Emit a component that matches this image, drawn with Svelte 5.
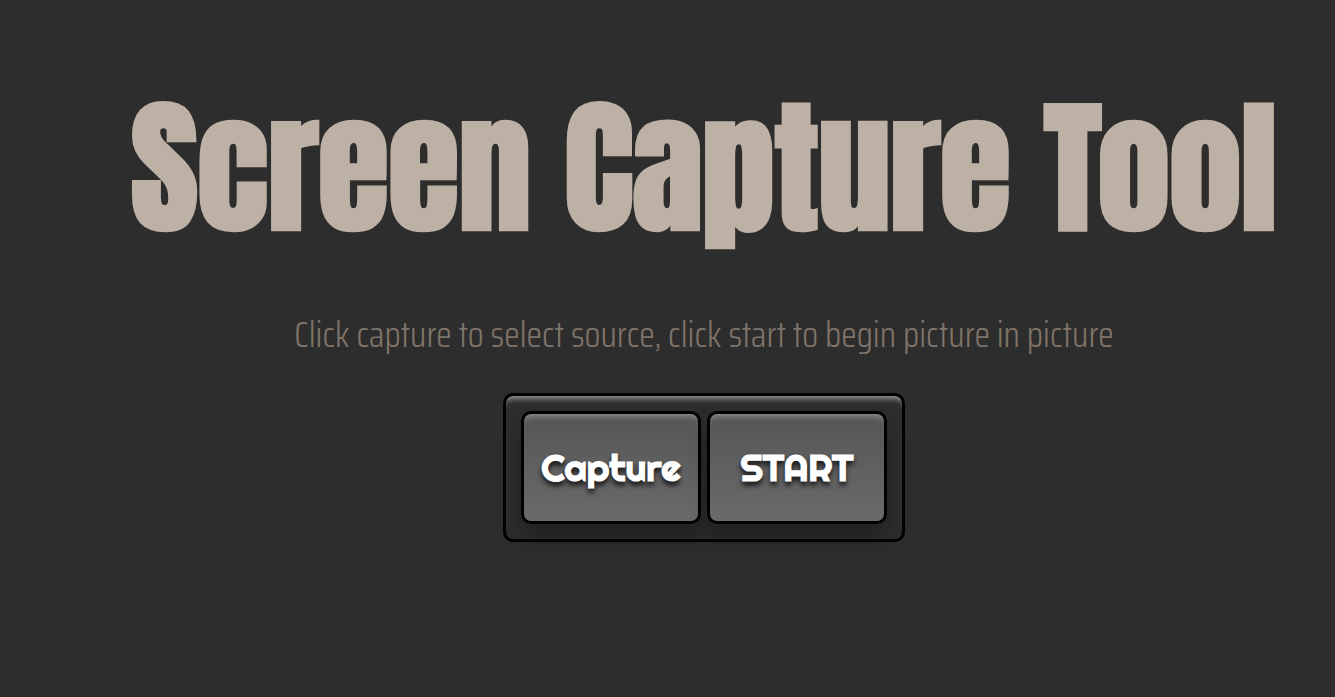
<script>
  let source = $state(false);
  let running = $state(false);
</script>

<main>
  <h1>Screen Capture Tool</h1>
  <p>Click capture to select source, click start to begin picture in picture</p>
  <div class="panel">
    <button type="button" onclick={() => (source = true)}>Capture</button>
    <button type="button" onclick={() => (running = source)}>START</button>
  </div>
</main>

<style>
  :global(body) {
    margin: 0;
    background: #2d2d2d;
  }

  main {
    display: flex;
    flex-direction: column;
    align-items: center;
    box-sizing: border-box;
    min-height: 100vh;
    padding: 84px 0 40px 73px;
    text-align: center;
  }

  h1 {
    margin: 0;
    color: #bdb0a4;
    font: bold 144px/168px Anton, "Roboto Condensed", sans-serif;
    white-space: nowrap;
  }

  p {
    margin: 60px 0 36px;
    color: #7f746a;
    font: 300 36px/45px "Saira Condensed", "Roboto Condensed", sans-serif;
  }

  .panel {
    display: flex;
    gap: 6px;
    padding: 15px;
    border: 3px solid #000;
    border-radius: 10px;
    box-shadow: inset 0 8px 6px -6px rgba(255, 255, 255, 0.6);
  }

  button {
    width: 180px;
    height: 113px;
    padding: 0;
    border: 3px solid #000;
    border-radius: 10px;
    background: linear-gradient(#565656, #6a6a6a);
    box-shadow:
      inset 0 8px 6px -6px rgba(255, 255, 255, 0.35),
      0 16px 20px rgba(0, 0, 0, 0.25);
    color: #fff;
    font: bold 37px/48px Righteous, "Lato", sans-serif;
    text-shadow: 0 4px 5px rgba(0, 0, 0, 0.75);
    cursor: pointer;
  }
</style>
